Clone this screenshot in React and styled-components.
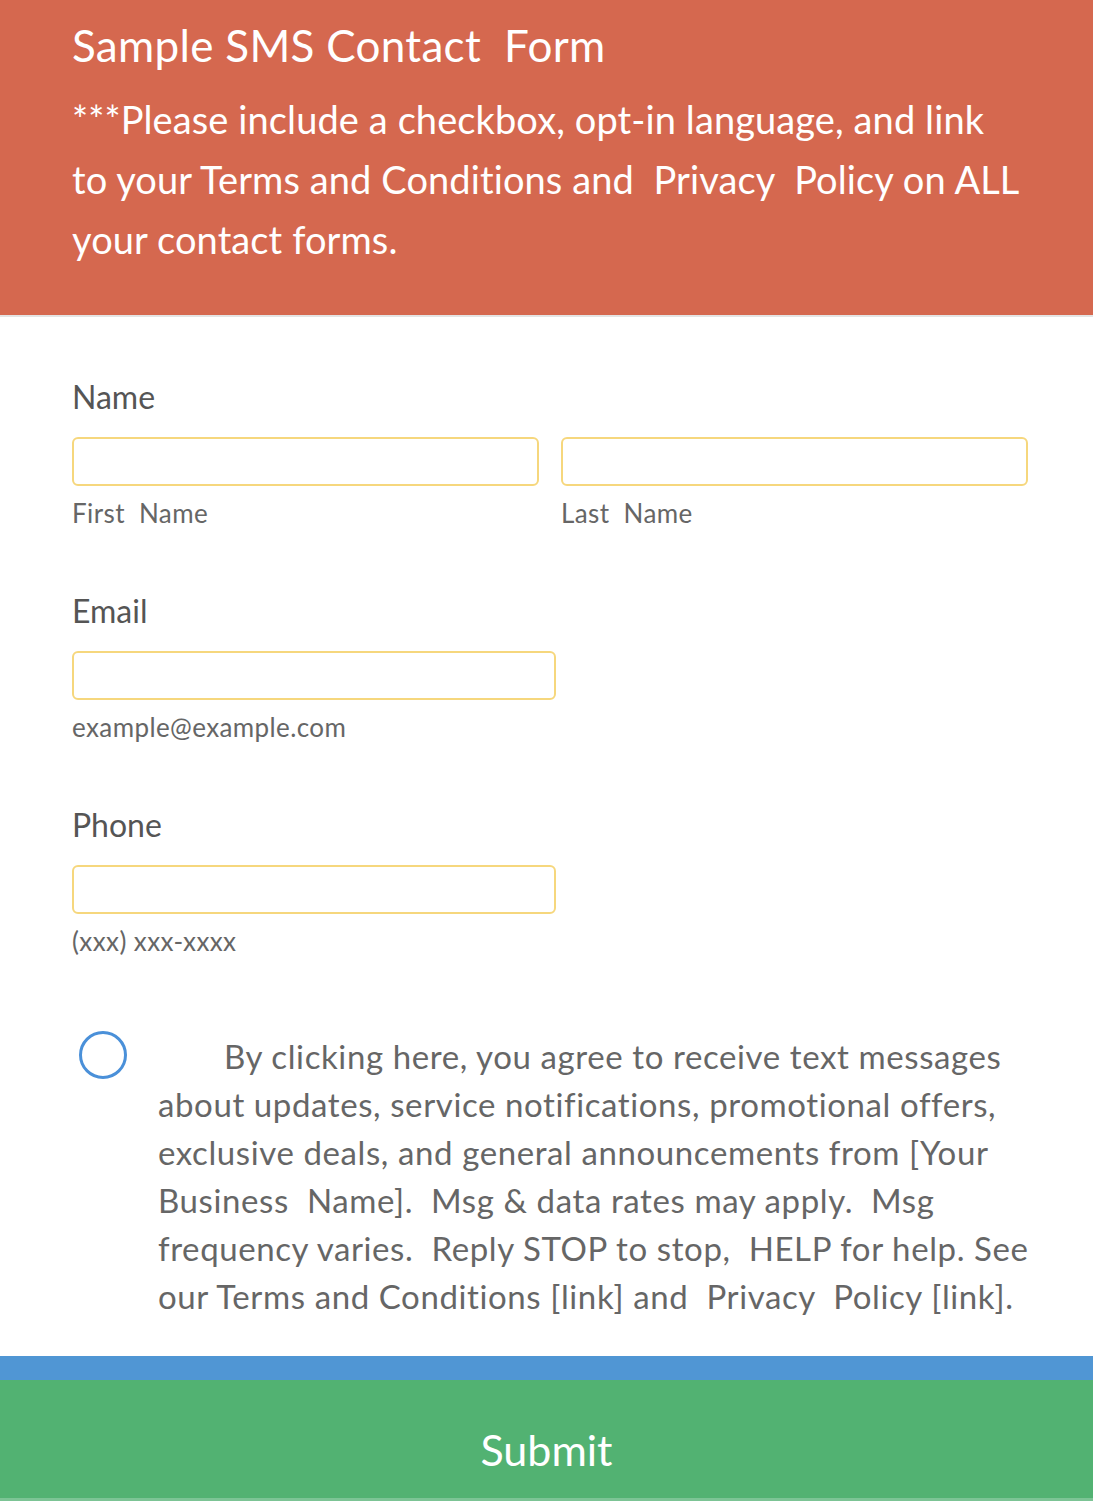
import React from 'react';
import styled, { createGlobalStyle } from 'styled-components';

const GlobalStyle = createGlobalStyle`
  html, body {
    margin: 0;
    padding: 0;
    background: #ffffff;
  }
  body {
    font-family: Lato, "Open Sans", sans-serif;
  }
`;

const App = () => {
  return (
    <Page>
      <GlobalStyle />
      <Header>
        <Title>Sample SMS Contact&nbsp; Form</Title>
        <Notice>
          ***Please include a checkbox, opt-in language, and link<br />
          to your Terms and Conditions and&nbsp; Privacy&nbsp; Policy on ALL<br />
          your contact forms.
        </Notice>
      </Header>
      <Form>
        <Field>
          <Label>Name</Label>
          <Row>
            <Column>
              <TextBox type="text" />
              <SubLabel>First&nbsp; Name</SubLabel>
            </Column>
            <Column>
              <TextBox type="text" />
              <SubLabel>Last&nbsp; Name</SubLabel>
            </Column>
          </Row>
        </Field>
        <Field>
          <Label>Email</Label>
          <Column $narrow>
            <TextBox type="email" />
            <SubLabel>example@example.com</SubLabel>
          </Column>
        </Field>
        <Field>
          <Label>Phone</Label>
          <Column $narrow>
            <TextBox type="tel" />
            <SubLabel>(xxx) xxx-xxxx</SubLabel>
          </Column>
        </Field>
        <Consent>
          <Circle />
          <ConsentText>
            By clicking here, you agree to receive text messages<br />
            about updates, service notifications, promotional offers,<br />
            exclusive deals, and general announcements from [Your<br />
            Business&nbsp; Name].&nbsp; Msg &amp; data rates may apply.&nbsp; Msg<br />
            frequency varies.&nbsp; Reply STOP to stop,&nbsp; HELP for help. See<br />
            our Terms and Conditions [link] and&nbsp; Privacy&nbsp; Policy [link].
          </ConsentText>
        </Consent>
      </Form>
      <BlueBar />
      <SubmitButton type="button">Submit</SubmitButton>
    </Page>
  );
};

const Page = styled.div`
  width: 1093px;
  min-height: 1503px;
  background: #ffffff;
  display: flex;
  flex-direction: column;
`;

const Header = styled.header`
  background: #d5684f;
  padding: 17px 20px 0 72px;
  border-bottom: 2px solid #e4e4e4;
  height: 298px;
`;

const Title = styled.h1`
  margin: 0;
  font-family: Lato, sans-serif;
  font-weight: 400;
  font-size: 44px;
  line-height: 56px;
  color: #ffffff;
  letter-spacing: 0.3px;
  white-space: nowrap;
`;

const Notice = styled.p`
  margin: 16px 0 0 0;
  font-size: 38px;
  line-height: 60px;
  color: #ffffff;
  letter-spacing: 0.1px;
  white-space: nowrap;
`;

const Form = styled.form`
  padding: 60px 20px 36px 72px;
  display: flex;
  flex-direction: column;
`;

const Field = styled.div`
  display: flex;
  flex-direction: column;
  margin-bottom: 63px;
`;

const Label = styled.label`
  font-size: 32px;
  line-height: 40px;
  color: #555555;
  margin-bottom: 20px;
`;

const Row = styled.div`
  display: flex;
  gap: 22px;
`;

const Column = styled.div`
  display: flex;
  flex-direction: column;
  width: ${(p) => (p.$narrow ? '484px' : '467px')};
`;

const TextBox = styled.input`
  box-sizing: border-box;
  width: 100%;
  height: 49px;
  border: 2px solid #f6d77d;
  border-radius: 6px;
  background: #ffffff;
  outline: none;
`;

const SubLabel = styled.span`
  font-size: 26px;
  line-height: 30px;
  color: #666666;
  margin-top: 12px;
  letter-spacing: 0.4px;
`;

const Consent = styled.div`
  display: flex;
  align-items: flex-start;
  margin-top: 4px;
`;

const Circle = styled.span`
  flex: none;
  box-sizing: border-box;
  width: 48px;
  height: 48px;
  border: 3px solid #4a90d9;
  border-radius: 50%;
  margin: 8px 0 0 7px;
`;

const ConsentText = styled.p`
  margin: 9px 0 0 31px;
  font-size: 33px;
  line-height: 48px;
  color: #666666;
  text-indent: 66px;
  letter-spacing: 0.6px;
  white-space: nowrap;
`;

const BlueBar = styled.div`
  height: 24px;
  background: #5096d4;
`;

const SubmitButton = styled.button`
  height: 121px;
  border: none;
  border-bottom: 3px solid #7cc495;
  background: #52b272;
  color: #ffffff;
  font-family: Lato, sans-serif;
  font-size: 43px;
  padding: 20px 0 0 0;
  cursor: pointer;
`;

export default App;
